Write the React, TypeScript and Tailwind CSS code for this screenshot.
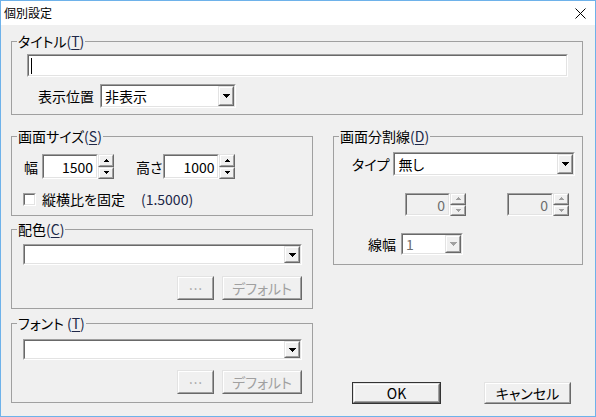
import React from 'react';

type Box = { className?: string; inner?: string; children?: React.ReactNode };

function Sunken({ className = '', inner = 'bg-white', children }: Box) {
  return (
    <div className={`border border-t-[#a0a0a0] border-l-[#a0a0a0] border-b-white border-r-white ${className}`}>
      <div className={`flex h-full w-full items-center border border-t-[#696969] border-l-[#696969] border-b-[#e3e3e3] border-r-[#e3e3e3] ${inner}`}>
        {children}
      </div>
    </div>
  );
}

function Raised({ className = '', children }: Box) {
  return (
    <div className={`border border-t-[#e3e3e3] border-l-[#e3e3e3] border-b-[#696969] border-r-[#696969] bg-[#f0f0f0] ${className}`}>
      <div className="flex h-full w-full items-center justify-center border border-t-white border-l-white border-b-[#a0a0a0] border-r-[#a0a0a0]">
        {children}
      </div>
    </div>
  );
}

function DownArrow({ color = '#000' }: { color?: string }) {
  return (
    <svg width="7" height="4" viewBox="0 0 7 4" fill={color} shapeRendering="crispEdges">
      <rect x="0" y="0" width="7" height="1" />
      <rect x="1" y="1" width="5" height="1" />
      <rect x="2" y="2" width="3" height="1" />
      <rect x="3" y="3" width="1" height="1" />
    </svg>
  );
}

function SpinArrow({ up, color }: { up?: boolean; color: string }) {
  return (
    <svg width="5" height="3" viewBox="0 0 5 3" fill={color} shapeRendering="crispEdges">
      {up ? (
        <>
          <rect x="2" y="0" width="1" height="1" />
          <rect x="1" y="1" width="3" height="1" />
          <rect x="0" y="2" width="5" height="1" />
        </>
      ) : (
        <>
          <rect x="0" y="0" width="5" height="1" />
          <rect x="1" y="1" width="3" height="1" />
          <rect x="2" y="2" width="1" height="1" />
        </>
      )}
    </svg>
  );
}

function Spinner({ disabled }: { disabled?: boolean }) {
  const c = disabled ? '#a0a0a0' : '#000';
  return (
    <div className="flex h-full w-[16px] flex-col">
      <Raised className="flex-1">
        <SpinArrow up color={c} />
      </Raised>
      <Raised className="flex-1">
        <SpinArrow color={c} />
      </Raised>
    </div>
  );
}

function Combo({ className = '', text = '', disabled }: { className?: string; text?: string; disabled?: boolean }) {
  return (
    <Sunken className={className}>
      <span className={`flex-1 pl-[3px] leading-[16px] ${disabled ? 'text-[#6d6d6d]' : 'text-black'}`}>{text}</span>
      <Raised className="h-full w-[16px]">
        <DownArrow color={disabled ? '#a0a0a0' : '#000'} />
      </Raised>
    </Sunken>
  );
}

function Group({ label, className = '', children }: { label: React.ReactNode; className?: string; children: React.ReactNode }) {
  return (
    <fieldset className={`border border-[#a0a0a0] ${className}`}>
      <legend className="ml-[5px] px-[1px] leading-[16px]">{label}</legend>
      {children}
    </fieldset>
  );
}

function Key({ k }: { k: string }) {
  return (
    <span className="text-[#202848]">
      (<span className="underline underline-offset-2">{k}</span>)
    </span>
  );
}

function GrayButton({ className = '', children }: Box) {
  return (
    <Raised className={`h-[24px] text-[#a0a0a0] ${className}`}>
      <span className="leading-[16px]">{children}</span>
    </Raised>
  );
}

export default function App() {
  return (
    <div className="flex h-[417px] w-[596px] flex-col border border-[#6eb2ea] font-['Noto_Sans_CJK_JP','Noto_Sans',sans-serif] text-[14px] text-black [font-feature-settings:'palt']">
      <div className="flex h-[24px] shrink-0 items-center justify-between bg-white pl-[3px] pr-[9px]">
        <span className="text-[12px] leading-[14px]">個別設定</span>
        <svg width="11" height="11" viewBox="0 0 11 11" stroke="#000" strokeWidth="1">
          <path d="M0.5 0.5L10.5 10.5M10.5 0.5L0.5 10.5" />
        </svg>
      </div>

      <div className="flex-1 bg-[#f0f0f0] pl-[10px] pt-[8px]">
        <Group label={<>タイトル<Key k="T" /></>} className="w-[572px] pb-[6px]">
          <Sunken className="ml-[15px] mt-[5px] h-[23px] w-[541px]">
            <div className="ml-[2px] h-[16px] w-px bg-black" />
          </Sunken>
          <div className="mt-[7px] flex h-[24px] items-center">
            <span className="ml-[26px] leading-[16px]">表示位置</span>
            <Combo className="ml-[6px] h-[24px] w-[136px]" text="非表示" />
          </div>
        </Group>

        <div className="mt-[13px] flex">
          <div className="flex w-[302px] flex-col">
            <Group label={<>画面サイズ<Key k="S" /></>} className="pb-[8px]">
              <div className="mt-[10px] flex h-[25px] items-center">
                <span className="ml-[12px] leading-[16px]">幅</span>
                <Sunken className="ml-[4px] h-full w-[56px]" inner="bg-white justify-end pr-[3px]">
                  <span className="leading-[16px]">1500</span>
                </Sunken>
                <Spinner />
                <span className="ml-[22px] leading-[16px]">高さ</span>
                <Sunken className="ml-[1px] h-full w-[56px]" inner="bg-white justify-end pr-[3px]">
                  <span className="leading-[16px]">1000</span>
                </Sunken>
                <Spinner />
              </div>
              <div className="mt-[12px] flex h-[16px] items-center">
                <Sunken className="ml-[11px] h-[13px] w-[13px]" />
                <span className="ml-[6px] leading-[16px]">縦横比を固定</span>
                <span className="ml-[16px] leading-[16px] text-[#202848]">(1.5000)</span>
              </div>
            </Group>

            <Group label={<>配色<Key k="C" /></>} className="mt-[5px] pb-[8px]">
              <Combo className="ml-[11px] mt-[7px] h-[21px] w-[279px]" />
              <div className="mt-[11px] flex justify-end gap-[8px] pr-[10px]">
                <GrayButton className="w-[37px]">…</GrayButton>
                <GrayButton className="w-[80px]">デフォルト</GrayButton>
              </div>
            </Group>

            <Group label={<>フォント <Key k="T" /></>} className="mt-[6px] pb-[8px]">
              <Combo className="ml-[11px] mt-[8px] h-[21px] w-[279px]" />
              <div className="mt-[10px] flex justify-end gap-[8px] pr-[10px]">
                <GrayButton className="w-[37px]">…</GrayButton>
                <GrayButton className="w-[80px]">デフォルト</GrayButton>
              </div>
            </Group>
          </div>

          <div className="ml-[20px] flex w-[250px] flex-col">
            <Group label={<>画面分割線<Key k="D" /></>} className="pb-[9px]">
              <div className="mt-[8px] flex h-[24px] items-center">
                <span className="ml-[18px] leading-[16px]">タイプ</span>
                <Combo className="ml-[4px] h-full w-[182px]" text="無し" />
              </div>
              <div className="mt-[17px] flex h-[23px] items-center">
                <Sunken className="ml-[71px] h-full w-[45px]" inner="bg-[#f0f0f0] justify-end pr-[3px]">
                  <span className="leading-[16px] text-[#6d6d6d]">0</span>
                </Sunken>
                <Spinner disabled />
                <Sunken className="ml-[41px] h-full w-[46px]" inner="bg-[#f0f0f0] justify-end pr-[3px]">
                  <span className="leading-[16px] text-[#6d6d6d]">0</span>
                </Sunken>
                <Spinner disabled />
              </div>
              <div className="mt-[17px] flex h-[22px] items-center">
                <span className="ml-[34px] leading-[16px]">線幅</span>
                <Combo className="ml-[5px] h-full w-[62px]" text="1" disabled />
              </div>
            </Group>

            <div className="mt-[117px] flex">
              <div className="ml-[19px] h-[22px] w-[89px] border border-[#333]">
                <Raised className="h-full w-full">
                  <span className="leading-[16px]">OK</span>
                </Raised>
              </div>
              <Raised className="ml-[43px] h-[22px] w-[87px]">
                <span className="leading-[16px]">キャンセル</span>
              </Raised>
            </div>
          </div>
        </div>
      </div>
    </div>
  );
}
